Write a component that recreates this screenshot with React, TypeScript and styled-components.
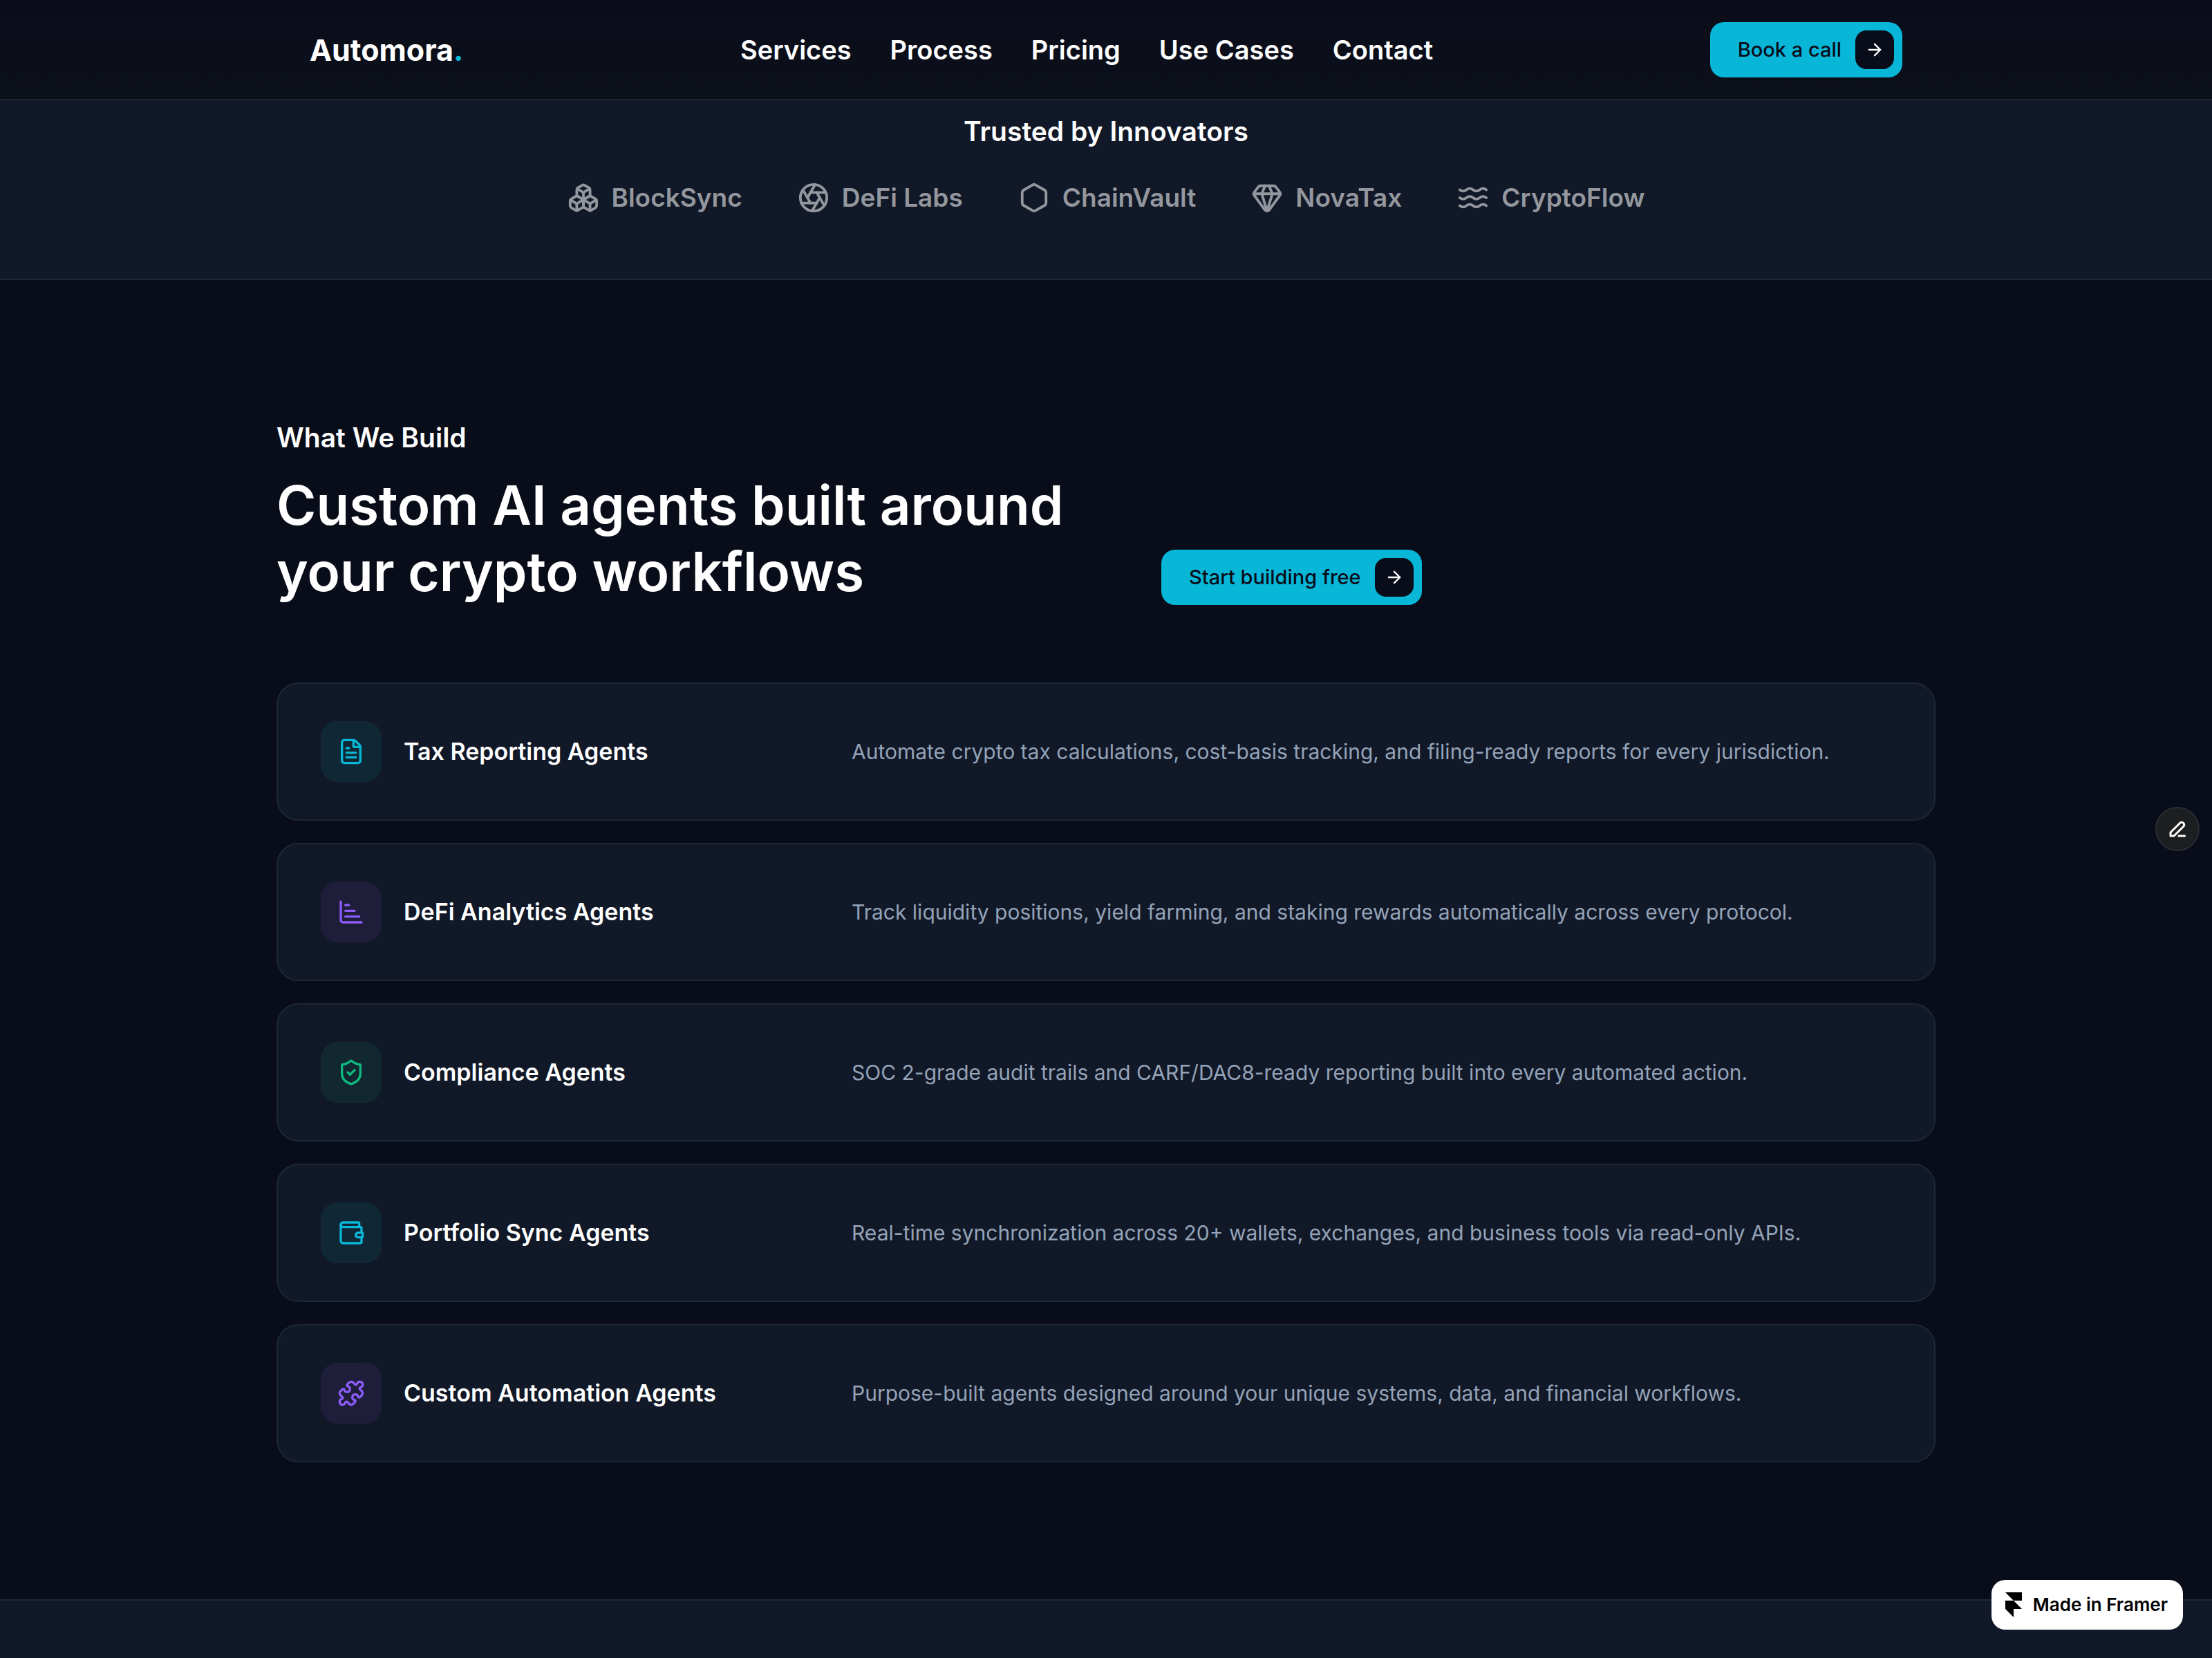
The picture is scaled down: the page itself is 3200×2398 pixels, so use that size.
import React from 'react';
import styled, { createGlobalStyle } from 'styled-components';
import {
  Aperture,
  ArrowRight,
  Boxes,
  ChartBarIncreasing,
  FileText,
  Gem,
  Hexagon,
  Puzzle,
  ShieldCheck,
  Wallet,
  Waves,
} from 'lucide-react';
import type { LucideIcon } from 'lucide-react';

const color = {
  page: '#090d19',
  header: '#0c101b',
  panel: '#111827',
  line: '#1c2737',
  cyan: '#08b6d8',
  white: '#ffffff',
  muted: '#94a3b8',
  logo: '#94979e',
};

const GlobalStyle = createGlobalStyle`
  *, *::before, *::after { box-sizing: border-box; }
  body {
    margin: 0;
    background: ${color.page};
    color: ${color.white};
    font-family: Inter, "Liberation Sans", sans-serif;
  }
  h1, h2, h3, p, ul { margin: 0; padding: 0; }
  ul { list-style: none; }
  a { color: inherit; text-decoration: none; }
  button { font-family: inherit; border: 0; cursor: pointer; }
`;

const Page = styled.div`
  display: flex;
  flex-direction: column;
  min-height: 100vh;
`;

const Header = styled.header`
  background: linear-gradient(#0a0d19, ${color.header});
  border-bottom: 2px solid ${color.line};
`;

const HeaderInner = styled.div`
  display: flex;
  align-items: center;
  justify-content: space-between;
  max-width: 2400px;
  height: 143px;
  margin: 0 auto;
  padding: 0 48px;
`;

const Brand = styled.a`
  font-size: 43px;
  line-height: 56px;
  font-weight: 700;

  span { color: ${color.cyan}; }
`;

const Nav = styled.nav`
  display: flex;
  gap: 56px;
  font-size: 38px;
  line-height: 48px;
  font-weight: 600;
`;

const CtaButton = styled.button`
  display: inline-flex;
  align-items: center;
  justify-content: space-between;
  gap: 20px;
  height: 80px;
  padding: 0 12px 0 40px;
  border-radius: 20px;
  background: ${color.cyan};
  color: ${color.page};
  font-size: 29px;
  line-height: 36px;
  font-weight: 500;
  white-space: nowrap;
`;

const ArrowBox = styled.span`
  display: grid;
  place-items: center;
  width: 56px;
  height: 56px;
  border-radius: 16px;
  background: ${color.page};
  color: ${color.white};
`;

const Trusted = styled.section`
  display: flex;
  flex-direction: column;
  align-items: center;
  gap: 48px;
  padding: 21px 48px 93px;
  background: ${color.panel};
  border-bottom: 2px solid ${color.line};
`;

const Eyebrow = styled.h2`
  font-size: 39px;
  line-height: 48px;
  font-weight: 600;
`;

const LogoList = styled.ul`
  display: flex;
  flex-wrap: wrap;
  justify-content: center;
  gap: 32px 80px;
`;

const LogoItem = styled.li`
  display: flex;
  align-items: center;
  gap: 18px;
  color: ${color.logo};
  font-size: 37px;
  line-height: 48px;
  font-weight: 600;
`;

const Services = styled.section`
  width: 100%;
  max-width: 2400px;
  margin: 0 auto;
  padding: 204px 0 198px;
`;

const Intro = styled.div`
  display: grid;
  grid-template-columns: minmax(0, 1200px) 1fr;
  column-gap: 80px;
  align-items: end;
`;

const IntroText = styled.div`
  display: flex;
  flex-direction: column;
  gap: 26px;
`;

const Headline = styled.h1`
  font-size: 78px;
  line-height: 96px;
  font-weight: 600;
`;

const CardList = styled.ul`
  display: flex;
  flex-direction: column;
  gap: 32px;
  margin-top: 112px;
`;

const Card = styled.li`
  display: grid;
  grid-template-columns: 616px 1fr;
  column-gap: 152px;
  align-items: center;
  min-height: 200px;
  padding: 0 62px;
  border: 2px solid ${color.line};
  border-radius: 32px;
  background: ${color.panel};
`;

const CardName = styled.div`
  display: flex;
  align-items: center;
  gap: 32px;
`;

const IconTile = styled.span<{ $tint: string; $fill: string }>`
  display: grid;
  place-items: center;
  flex: none;
  width: 88px;
  height: 88px;
  border-radius: 24px;
  background: ${(p) => p.$fill};
  color: ${(p) => p.$tint};
`;

const CardTitle = styled.h3`
  font-size: 34px;
  line-height: 44px;
  font-weight: 600;
  white-space: nowrap;
`;

const CardText = styled.p`
  color: ${color.muted};
  font-size: 30px;
  line-height: 48px;
`;

const NextSection = styled.section`
  flex: 1;
  min-height: 84px;
  border-top: 2px solid ${color.line};
  background: ${color.panel};
`;

const EditButton = styled.button`
  position: fixed;
  top: 50%;
  right: 18px;
  display: grid;
  place-items: center;
  width: 64px;
  height: 64px;
  margin-top: -32px;
  padding: 0;
  border: 2px solid #2b2c36;
  border-radius: 50%;
  background: #1d1e20;
  color: ${color.white};
`;

const FramerBadge = styled.a`
  position: fixed;
  right: 42px;
  bottom: 41px;
  display: flex;
  align-items: center;
  gap: 16px;
  height: 72px;
  padding: 0 22px 0 20px;
  border-radius: 20px;
  background: ${color.white};
  color: #000000;
  font-size: 26px;
  line-height: 32px;
  font-weight: 600;
`;

const navItems = ['Services', 'Process', 'Pricing', 'Use Cases', 'Contact'];

const logos: { name: string; Icon: LucideIcon }[] = [
  { name: 'BlockSync', Icon: Boxes },
  { name: 'DeFi Labs', Icon: Aperture },
  { name: 'ChainVault', Icon: Hexagon },
  { name: 'NovaTax', Icon: Gem },
  { name: 'CryptoFlow', Icon: Waves },
];

const tones = {
  cyan: { tint: '#08b6d8', fill: '#102836' },
  violet: { tint: '#8b5cf6', fill: '#1e1e3b' },
  green: { tint: '#10b981', fill: '#112830' },
};

const services: { name: string; text: string; tone: keyof typeof tones; Icon: LucideIcon }[] = [
  {
    name: 'Tax Reporting Agents',
    text: 'Automate crypto tax calculations, cost-basis tracking, and filing-ready reports for every jurisdiction.',
    tone: 'cyan',
    Icon: FileText,
  },
  {
    name: 'DeFi Analytics Agents',
    text: 'Track liquidity positions, yield farming, and staking rewards automatically across every protocol.',
    tone: 'violet',
    Icon: ChartBarIncreasing,
  },
  {
    name: 'Compliance Agents',
    text: 'SOC 2-grade audit trails and CARF/DAC8-ready reporting built into every automated action.',
    tone: 'green',
    Icon: ShieldCheck,
  },
  {
    name: 'Portfolio Sync Agents',
    text: 'Real-time synchronization across 20+ wallets, exchanges, and business tools via read-only APIs.',
    tone: 'cyan',
    Icon: Wallet,
  },
  {
    name: 'Custom Automation Agents',
    text: 'Purpose-built agents designed around your unique systems, data, and financial workflows.',
    tone: 'violet',
    Icon: Puzzle,
  },
];

function Cta({ children }: { children: React.ReactNode }) {
  return (
    <CtaButton type="button">
      {children}
      <ArrowBox>
        <ArrowRight size={28} strokeWidth={2} />
      </ArrowBox>
    </CtaButton>
  );
}

function PenIcon() {
  return (
    <svg width="24" height="24" viewBox="0 0 24 24" fill="none" stroke="currentColor" strokeWidth="3" strokeLinecap="round" strokeLinejoin="round" aria-hidden="true">
      <path d="M2 22v-5L16 3a3.6 3.6 0 0 1 5 5L7 22Z" />
      <path d="M14 22h8.5" />
    </svg>
  );
}

function FramerLogo() {
  return (
    <svg width="24" height="36" viewBox="0 0 24 36" aria-hidden="true">
      <path d="M0 0h24v12H12ZM0 12h12l12 12H12v12L0 24Z" />
    </svg>
  );
}

export default function App() {
  return (
    <Page>
      <GlobalStyle />
      <Header>
        <HeaderInner>
          <Brand href="#">
            Automora<span>.</span>
          </Brand>
          <Nav>
            {navItems.map((item) => (
              <a key={item} href="#">
                {item}
              </a>
            ))}
          </Nav>
          <Cta>Book a call</Cta>
        </HeaderInner>
      </Header>

      <Trusted>
        <Eyebrow>Trusted by Innovators</Eyebrow>
        <LogoList>
          {logos.map(({ name, Icon }) => (
            <LogoItem key={name}>
              <Icon size={46} strokeWidth={2} />
              {name}
            </LogoItem>
          ))}
        </LogoList>
      </Trusted>

      <Services>
        <Intro>
          <IntroText>
            <Eyebrow>What We Build</Eyebrow>
            <Headline>
              Custom AI agents built around
              <br />
              your crypto workflows
            </Headline>
          </IntroText>
          <div>
            <Cta>Start building free</Cta>
          </div>
        </Intro>
        <CardList>
          {services.map(({ name, text, tone, Icon }) => (
            <Card key={name}>
              <CardName>
                <IconTile $tint={tones[tone].tint} $fill={tones[tone].fill}>
                  <Icon size={40} strokeWidth={2} />
                </IconTile>
                <CardTitle>{name}</CardTitle>
              </CardName>
              <CardText>{text}</CardText>
            </Card>
          ))}
        </CardList>
      </Services>

      <NextSection />

      <EditButton type="button" aria-label="Edit">
        <PenIcon />
      </EditButton>
      <FramerBadge href="#">
        <FramerLogo />
        Made in Framer
      </FramerBadge>
    </Page>
  );
}
